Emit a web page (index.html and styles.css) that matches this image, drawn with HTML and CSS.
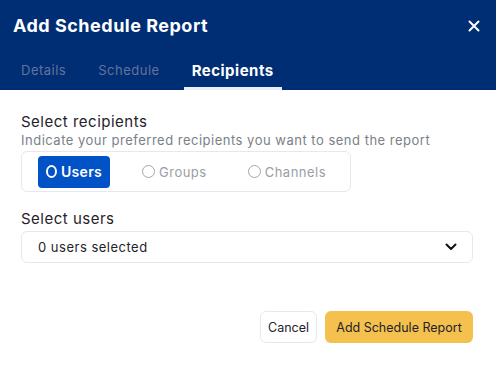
FILE: index.html
```html
<!DOCTYPE html>
<html lang="en">
<head>
  <meta charset="UTF-8">
  <title>Add Schedule Report</title>
  <link rel="stylesheet" href="styles.css">
</head>
<body>
  <div class="modal">
    <div class="modal-header">
      <div class="title-row">
        <h1>Add Schedule Report</h1>
        <button class="close-btn" aria-label="Close">
          <svg width="12" height="12" viewBox="0 0 12 12"><path d="M1.5 1.5L10.5 10.5M10.5 1.5L1.5 10.5" stroke="#fff" stroke-width="2" stroke-linecap="round"/></svg>
        </button>
      </div>
      <div class="tabs">
        <div class="tab">Details</div>
        <div class="tab">Schedule</div>
        <div class="tab active">Recipients</div>
      </div>
    </div>

    <div class="modal-body">
      <div class="label">Select recipients</div>
      <div class="hint">Indicate your preferred recipients you want to send the report</div>
      <div class="radio-group">
        <div class="radio-option selected"><span class="radio"></span>Users</div>
        <div class="radio-option"><span class="radio"></span>Groups</div>
        <div class="radio-option"><span class="radio"></span>Channels</div>
      </div>

      <div class="label users-label">Select users</div>
      <div class="select">
        <span>0 users selected</span>
        <svg width="12" height="8" viewBox="0 0 12 8"><path d="M1.5 1.5L6 6L10.5 1.5" fill="none" stroke="#111" stroke-width="2" stroke-linecap="round" stroke-linejoin="round"/></svg>
      </div>
    </div>

    <div class="modal-footer">
      <button class="btn btn-cancel">Cancel</button>
      <button class="btn btn-primary">Add Schedule Report</button>
    </div>
  </div>
</body>
</html>
```

FILE: styles.css
```css
* {
  margin: 0;
  padding: 0;
  box-sizing: border-box;
}

body {
  font-family: 'Inter', 'Liberation Sans', sans-serif;
  letter-spacing: 0.5px;
  background: #fff;
  color: #1f2329;
  width: 496px;
  height: 366px;
  overflow: hidden;
}

.modal-header {
  background: #002e74;
  color: #fff;
  height: 90px;
  display: flex;
  flex-direction: column;
}

.title-row {
  display: flex;
  align-items: center;
  justify-content: space-between;
  padding: 0 15px 0 13px;
  height: 52px;
}

h1 {
  font-size: 18px;
  font-weight: 700;
}

.close-btn {
  background: none;
  border: none;
  display: flex;
  align-items: center;
  justify-content: center;
  width: 14px;
  height: 14px;
}

.tabs {
  display: flex;
  padding-left: 5px;
  margin-top: auto;
}

.tab {
  font-size: 13px;
  color: #63739a;
  padding: 11px 16px 8px;
  border-bottom: 3px solid transparent;
}

.tab.active {
  color: #fff;
  font-weight: 700;
  font-size: 15px;
  padding: 10px 0 7px;
  margin-left: 8px;
  width: 98px;
  text-align: center;
  border-bottom-color: #e8eef7;
}

.modal-body {
  padding: 22px 23px 0 21px;
}

.label {
  font-size: 15px;
  color: #1f2329;
  line-height: 20px;
}

.hint {
  font-size: 13px;
  color: #7a7f88;
  line-height: 16px;
  margin-bottom: 3px;
}

.radio-group {
  display: flex;
  align-items: center;
  width: 330px;
  height: 41px;
  border: 1px solid #e6e8ee;
  border-radius: 6px;
  padding: 0 16px;
  gap: 32px;
}

.radio-option {
  display: flex;
  align-items: center;
  gap: 4px;
  font-size: 13px;
  color: #9a9ea5;
  height: 32px;
}

.radio-option:nth-child(3) {
  margin-left: 9px;
}

.radio-option.selected {
  background: #0151c7;
  color: #fff;
  font-weight: 600;
  font-size: 14px;
  padding: 0 8px;
  border-radius: 4px;
  width: 72px;
  letter-spacing: 0.3px;
}

.radio {
  width: 13px;
  height: 13px;
  border-radius: 50%;
  border: 1px solid #a3a6ab;
  background: #fff;
}

.selected .radio {
  border: 2.5px solid #fff;
  background: transparent;
}

.users-label {
  margin-top: 17px;
  margin-bottom: 2px;
}

.select {
  display: flex;
  align-items: center;
  justify-content: space-between;
  height: 32px;
  border: 1px solid #e6e8ee;
  border-radius: 6px;
  padding: 0 15px 0 16px;
  font-size: 13px;
  color: #1f2329;
}

.modal-footer {
  display: flex;
  justify-content: flex-end;
  gap: 8px;
  padding: 48px 23px 0 0;
}

.btn {
  font-family: inherit;
  letter-spacing: 0;
  font-size: 12.5px;
  height: 32px;
  border-radius: 6px;
  color: #1f2329;
}

.btn-cancel {
  background: #fff;
  border: 1px solid #e6e8ee;
  width: 57px;
}

.btn-primary {
  background: #f4c04e;
  border: none;
  width: 148px;
}
```
